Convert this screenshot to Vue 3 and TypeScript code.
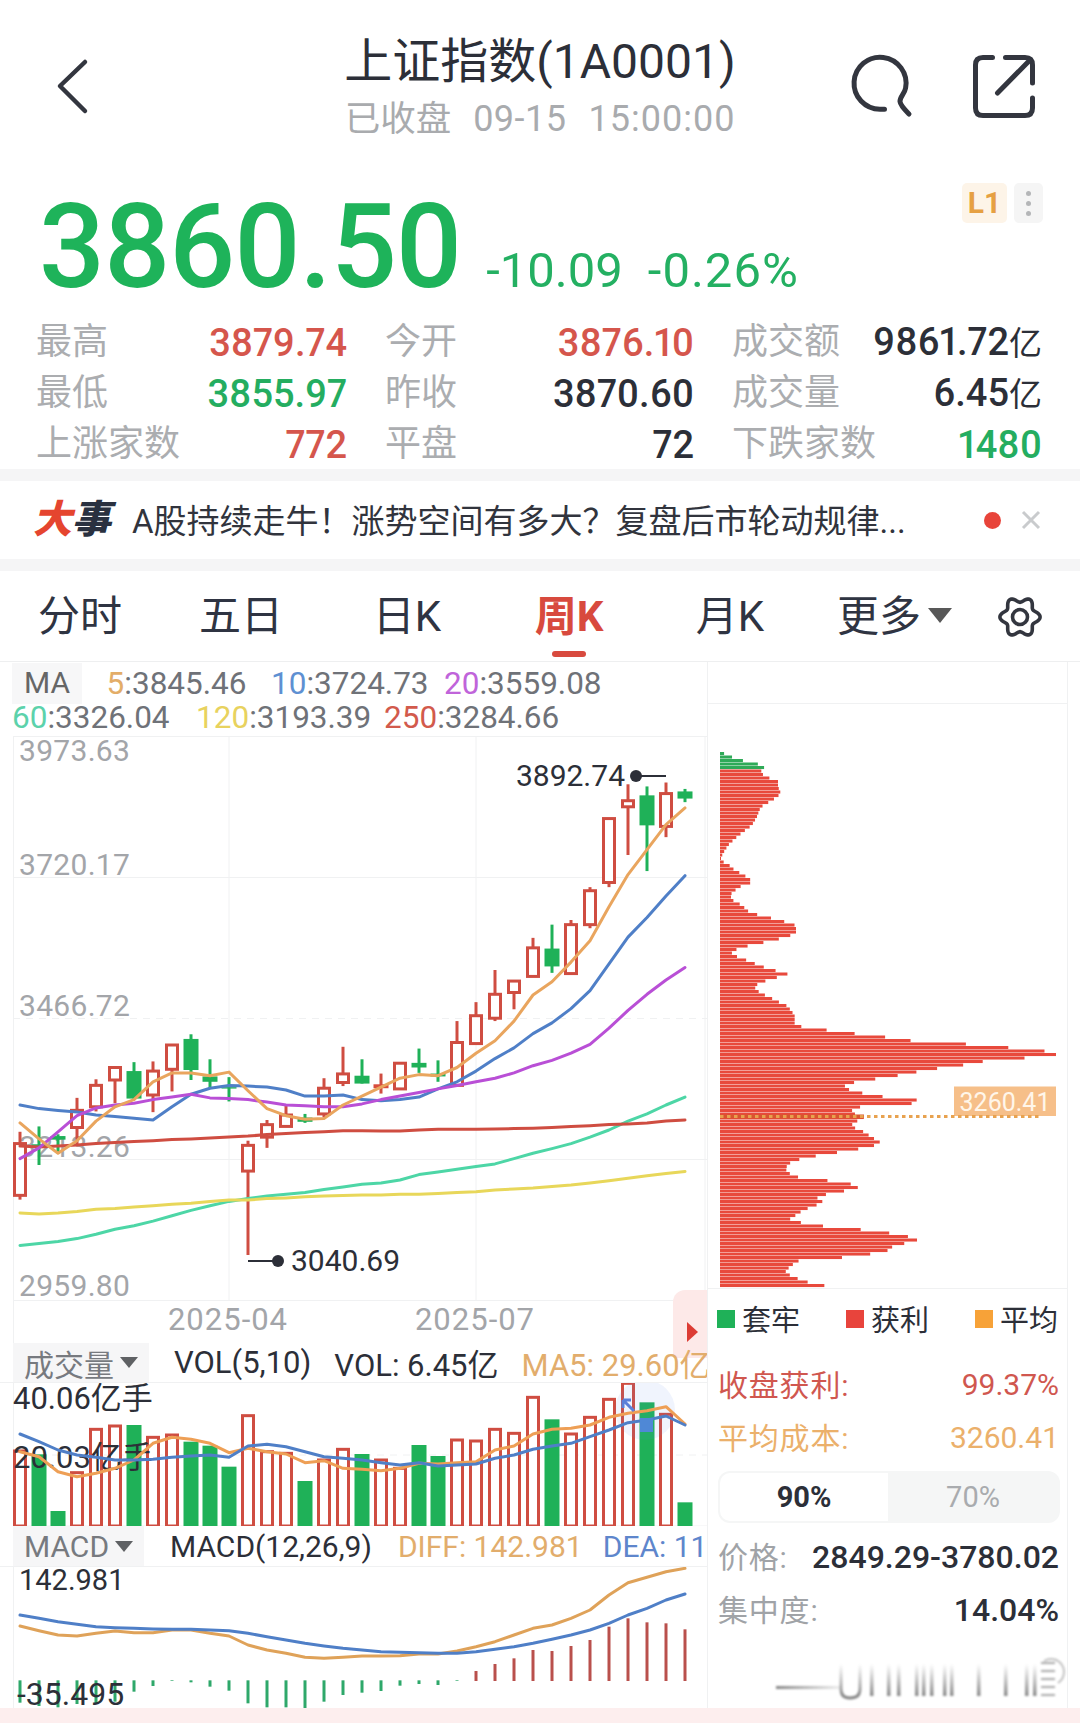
<script setup lang="ts">
const kx = (i: number) => 20 + 19 * i
const ky = (z: number) => 730 + z / 2.8
const sy = (z: number) => 1280 + z / 3
const line = (pts: number[], map: (z: number) => number) =>
  pts.map((z, i) => `${kx(i)},${map(z).toFixed(1)}`).join(' ')

// type (r hollow, s solid red, g solid green), bodyTop, bodyBottom, wickTop, wickBottom (crop coordinates)
const rawCandles: [string, number, number, number, number][] = [
  ['r', 1158, 1303, 1125, 1315], ['g', 1160, 1168, 1110, 1218], ['g', 1137, 1147, 1132, 1185], ['r', 1065, 1113, 1030, 1165],
  ['r', 995, 1055, 978, 1068], ['r', 945, 980, 943, 1045], ['g', 955, 1032, 930, 1035], ['r', 955, 1022, 928, 1070],
  ['r', 882, 950, 880, 1012], ['g', 865, 952, 852, 980], ['g', 970, 985, 922, 1005], ['g', 1000, 1004, 972, 1040],
  ['r', 1163, 1235, 1150, 1470], ['r', 1105, 1140, 1092, 1170], ['r', 1078, 1110, 1050, 1110], ['g', 1085, 1097, 1075, 1100],
  ['r', 1003, 1075, 975, 1085], ['r', 963, 987, 887, 997], ['g', 968, 990, 922, 990], ['s', 992, 1003, 962, 1018],
  ['r', 933, 1005, 930, 1005], ['g', 932, 945, 892, 960], ['g', 962, 970, 925, 985], ['r', 875, 995, 815, 995],
  ['r', 800, 878, 762, 878], ['r', 740, 807, 672, 815], ['r', 703, 735, 703, 782], ['r', 610, 690, 582, 690],
  ['g', 612, 662, 545, 680], ['r', 545, 682, 532, 682], ['r', 450, 545, 440, 555], ['r', 248, 427, 248, 440],
  ['r', 198, 215, 152, 350], ['g', 183, 267, 158, 395], ['r', 178, 270, 147, 300], ['g', 172, 192, 165, 202],
]
const candles = rawCandles.map(([t, a, b, c, d], i) => ({
  t, x: kx(i), top: ky(a), bot: ky(b), wt: ky(c), wb: ky(d),
}))

const maLines = [
  { c: '#4dd6a6', p: [1443, 1438, 1432, 1424, 1412, 1398, 1388, 1375, 1360, 1345, 1332, 1320, 1312, 1305, 1300, 1295, 1287, 1280, 1272, 1268, 1260, 1245, 1238, 1230, 1222, 1215, 1200, 1185, 1172, 1158, 1140, 1120, 1095, 1075, 1050, 1028] },
  { c: '#e8d75a', p: [1352, 1355, 1352, 1348, 1342, 1340, 1336, 1332, 1328, 1325, 1320, 1316, 1316, 1312, 1310, 1307, 1305, 1303, 1302, 1302, 1300, 1300, 1298, 1295, 1293, 1288, 1285, 1282, 1278, 1274, 1268, 1262, 1255, 1248, 1242, 1236] },
  { c: '#cf4d41', p: [1165, 1168, 1165, 1162, 1158, 1155, 1152, 1150, 1147, 1145, 1142, 1140, 1137, 1133, 1130, 1127, 1125, 1122, 1122, 1123, 1123, 1120, 1118, 1118, 1118, 1117, 1116, 1115, 1113, 1110, 1108, 1105, 1103, 1100, 1095, 1092] },
  { c: '#4f7fc7', p: [1050, 1060, 1065, 1070, 1078, 1082, 1087, 1092, 1055, 1020, 1003, 995, 997, 1000, 1008, 1025, 1025, 1022, 1035, 1038, 1035, 1028, 1005, 985, 955, 920, 890, 850, 820, 780, 730, 655, 580, 525, 465, 408] },
  { c: '#b94fd6', p: [1200, 1170, 1125, 1080, 1058, 1050, 1045, 1035, 1028, 1020, 1030, 1032, 1035, 1042, 1050, 1052, 1055, 1055, 1047, 1035, 1025, 1015, 1005, 995, 985, 975, 960, 940, 925, 905, 880, 835, 785, 740, 700, 665] },
  { c: '#e9a55e', p: [1100, 1145, 1185, 1150, 1095, 1055, 1035, 985, 960, 960, 968, 958, 1010, 1060, 1080, 1090, 1088, 1050, 1025, 1000, 975, 965, 968, 945, 905, 870, 815, 742, 705, 650, 590, 495, 405, 335, 265, 218] },
].map((l) => ({ c: l.c, pts: line(l.p, ky) }))

const volTops = [513, 523, 693, 578, 448, 438, 435, 472, 465, 485, 497, 560, 407, 515, 520, 603, 540, 508, 522, 540, 565, 495, 528, 480, 483, 448, 460, 352, 418, 462, 412, 358, 310, 367, 403, 667]
const volGreen = new Set([1, 2, 6, 9, 10, 11, 15, 18, 21, 22, 28, 33, 35])
const volBars = volTops.map((z, i) => ({ x: kx(i), top: sy(z), green: volGreen.has(i) }))
const volBlue = line([462, 485, 510, 525, 532, 540, 540, 538, 532, 528, 525, 532, 498, 493, 500, 515, 530, 535, 540, 548, 555, 548, 558, 555, 552, 535, 525, 508, 498, 490, 470, 450, 428, 420, 408, 435], sy)
const volOrange = line([515, 530, 575, 590, 580, 565, 540, 490, 472, 478, 490, 518, 505, 515, 522, 548, 542, 565, 568, 572, 565, 550, 552, 548, 545, 510, 498, 462, 448, 445, 435, 412, 400, 392, 380, 432], sy)

const macdBlue = line([1005, 1015, 1025, 1033, 1040, 1043, 1045, 1047, 1048, 1048, 1050, 1052, 1060, 1070, 1080, 1090, 1098, 1105, 1110, 1115, 1117, 1118, 1120, 1120, 1115, 1108, 1100, 1090, 1078, 1065, 1050, 1030, 1005, 985, 960, 942], sy)
const macdOrange = line([1038, 1052, 1065, 1068, 1060, 1053, 1058, 1058, 1050, 1050, 1060, 1068, 1095, 1110, 1120, 1132, 1135, 1132, 1128, 1128, 1127, 1122, 1122, 1113, 1100, 1085, 1065, 1045, 1035, 1015, 990, 945, 908, 892, 875, 865], sy)
const macdEnds = [1268, 1278, 1282, 1272, 1270, 1265, 1235, 1218, 1201, 1207, 1220, 1232, 1270, 1282, 1282, 1285, 1265, 1245, 1238, 1233, 1217, 1212, 1215, 1203, 1173, 1152, 1135, 1110, 1113, 1098, 1080, 1040, 1015, 1027, 1030, 1048]
const macdBars = macdEnds.map((z, i) => {
  const a = sy(Math.min(z, 1201))
  const b = sy(Math.max(z, 1203))
  return { x: kx(i) - 1.5, y: a, h: b - a, up: z < 1201 }
})

const profileKeys: [number, number][] = [
  [225, 62], [232, 82], [243, 112], [250, 155], [260, 198], [268, 182], [282, 190], [290, 212], [297, 234], [310, 234], [325, 242], [335, 232], [345, 212], [360, 182], [385, 170], [405, 155], [420, 130], [435, 108], [450, 88], [465, 75], [480, 65], [490, 60], [500, 85], [515, 105], [525, 130], [543, 160], [555, 120], [570, 95], [585, 92], [600, 125], [615, 145], [625, 178], [632, 215], [640, 252], [650, 288], [670, 288], [682, 242], [690, 200], [697, 158], [705, 120], [715, 92], [725, 108], [735, 140], [745, 170], [755, 202], [762, 235], [770, 267], [777, 232], [790, 180], [800, 162], [815, 180], [825, 208], [835, 230], [845, 258], [855, 270], [870, 284], [895, 284], [900, 325], [908, 398], [915, 468], [922, 545], [932, 634], [940, 793], [948, 914], [955, 1000], [960, 1068], [968, 1068], [974, 985], [980, 872], [988, 812], [995, 770], [1003, 682], [1012, 632], [1020, 575], [1028, 510], [1038, 438], [1048, 432], [1058, 472], [1068, 535], [1076, 643], [1084, 680], [1093, 485], [1103, 456], [1112, 465], [1120, 492], [1132, 465], [1142, 450], [1150, 480], [1160, 500], [1170, 518], [1180, 540], [1190, 520], [1198, 472], [1206, 412], [1215, 345], [1222, 302], [1232, 270], [1245, 255], [1255, 265], [1265, 282], [1272, 355], [1278, 415], [1288, 485], [1297, 458], [1305, 398], [1315, 348], [1328, 370], [1338, 340], [1348, 308], [1358, 292], [1368, 268], [1375, 285], [1385, 352], [1392, 450], [1400, 542], [1408, 603], [1415, 640], [1423, 656], [1432, 592], [1440, 570], [1450, 558], [1465, 410], [1472, 295], [1485, 270], [1500, 255], [1510, 278], [1522, 315], [1530, 360], [1537, 406],
]
function profileAt(z: number): number {
  for (let i = 1; i < profileKeys.length; i++) {
    const [z0, x0] = profileKeys[i - 1]
    const [z1, x1] = profileKeys[i]
    if (z <= z1) return x0 + ((x1 - x0) * (z - z0)) / (z1 - z0)
  }
  return profileKeys[profileKeys.length - 1][1]
}
const profile = Array.from({ length: 153 }, (_, i) => {
  const y = 752 + i * 3.5
  const z = (y + 1.3 - 660) * 2.45
  return { y, w: Math.max(1, (profileAt(z) - 60) / 3), green: y < 767 }
})

const gear = Array.from({ length: 96 }, (_, i) => {
  const a = (i / 96) * Math.PI * 2
  const r = 17.4 + 2.7 * Math.cos(6 * a)
  return `${(1020 + r * Math.cos(a)).toFixed(2)},${(617.5 + r * Math.sin(a)).toFixed(2)}`
}).join(' ')

const stats = [
  { l: '最高', v: '3879.74', u: '', c: 'red' }, { l: '今开', v: '3876.10', u: '', c: 'red' }, { l: '成交额', v: '9861.72', u: '亿', c: '' },
  { l: '最低', v: '3855.97', u: '', c: 'green' }, { l: '昨收', v: '3870.60', u: '', c: '' }, { l: '成交量', v: '6.45', u: '亿', c: '' },
  { l: '上涨家数', v: '772', u: '', c: 'red' }, { l: '平盘', v: '72', u: '', c: '' }, { l: '下跌家数', v: '1480', u: '', c: 'green' },
]
const tabs = ['分时', '五日', '日K', '周K', '月K']
const ma1 = [
  { k: '5', v: ':3845.46', c: '#e3ad68' }, { k: '10', v: ':3724.73', c: '#5e90d2' }, { k: '20', v: ':3559.08', c: '#c064da' },
]
const ma2 = [
  { k: '60', v: ':3326.04', c: '#5cd2ab' }, { k: '120', v: ':3193.39', c: '#e8d25e' }, { k: '250', v: ':3284.66', c: '#d25a4c' },
]
const yLabels = [
  { t: '3973.63', y: 750 }, { t: '3720.17', y: 864 }, { t: '3466.72', y: 1005 }, { t: '3213.26', y: 1146 }, { t: '2959.80', y: 1285 },
]
const grid = [736.5, 877.5, 1159.5, 1300.5]
const wmBars = [870, 887, 897, 915, 922, 930, 943, 950, 977, 1004, 1025, 1033]
</script>

<template>
  <div class="page">
    <header class="top">
      <div class="top-left">
        <svg class="ic" width="40" height="60" viewBox="50 56 40 60">
          <path d="M85 62 L60 86 L85 111" />
        </svg>
      </div>
      <div class="top-mid">
        <div class="title">上证指数(1A0001)</div>
        <div class="sub"><span class="sub-cn">已收盘</span><span class="sub-d">09-15</span><span class="sub-t">15:00:00</span></div>
      </div>
      <div class="top-right">
        <svg class="ic" width="64" height="66" viewBox="850 53 64 66">
          <path d="M884.5 109.2 H880 A26 26 0 1 1 905.6 88 C905 93 899.6 97 900 101.5 C900.4 105.5 905 110 909 114" />
        </svg>
        <svg class="ic" width="66" height="68" viewBox="971 53 66 68">
          <path d="M992.5 57.5 H983 Q975.5 57.5 975.5 65 V108 Q975.5 115.5 983 115.5 H1025 Q1032.5 115.5 1032.5 108 V98" />
          <path d="M1005.5 57.5 H1025 Q1032.5 57.5 1032.5 65 V83" />
          <path d="M997.5 93 L1030 60" />
        </svg>
      </div>
    </header>

    <section class="quote">
      <div class="price">3860.50</div>
      <div class="chg">-10.09</div>
      <div class="chg pct">-0.26%</div>
      <div class="badges">
        <span class="badge-l1">L1</span>
        <span class="badge-more"><i></i><i></i><i></i></span>
      </div>
    </section>

    <section class="stats">
      <div v-for="s in stats" :key="s.l" class="stat">
        <span class="stat-l">{{ s.l }}</span>
        <span class="stat-v" :class="s.c">{{ s.v }}<span v-if="s.u" class="stat-u">{{ s.u }}</span></span>
      </div>
    </section>

    <div class="band"></div>
    <section class="news">
      <span class="logo"><b class="logo-a">大</b><b class="logo-b">事</b></span>
      <span class="news-t">A股持续走牛&#xFF01;涨势空间有多大&#xFF1F;复盘后市轮动规律...</span>
      <span class="news-dot"></span>
      <svg class="news-x" width="20" height="20" viewBox="0 0 20 20"><path d="M2 2 L18 18 M18 2 L2 18" /></svg>
    </section>
    <div class="band"></div>

    <nav class="tabs">
      <span v-for="t in tabs" :key="t" class="tab" :class="{ on: t === '周K' }">{{ t }}</span>
      <div class="tab-end">
        <span class="more">更多</span>
        <i class="more-tri"></i>
        <svg width="46" height="46" viewBox="997 594.5 46 46" class="gear">
          <polygon :points="gear" />
          <circle cx="1020" cy="617.5" r="7.5" />
        </svg>
      </div>
    </nav>

    <section class="board">
      <div class="charts">
        <div class="ma">
          <div class="ma-row first">
            <span class="ma-box">MA</span>
            <span v-for="m in ma1" :key="m.k" class="ma-item"><em :style="{ color: m.c }">{{ m.k }}</em>{{ m.v }}</span>
          </div>
          <div class="ma-row second">
            <span v-for="m in ma2" :key="m.k" class="ma-item"><em :style="{ color: m.c }">{{ m.k }}</em>{{ m.v }}</span>
          </div>
        </div>

        <div class="kline">
          <svg width="707" height="607" viewBox="0 736 707 607" class="plot">
            <line v-for="g in grid" :key="g" x1="13" x2="707" :y1="g" :y2="g" class="gl" />
            <line x1="13" x2="707" y1="1018.5" y2="1018.5" class="gl" stroke-dasharray="7 6" />
            <line x1="13.5" x2="13.5" y1="736" y2="1343" class="gl" />
            <line x1="229" x2="229" y1="736" y2="1300" class="gl" />
            <line x1="476" x2="476" y1="736" y2="1300" class="gl" />
            <line x1="705" x2="705" y1="736" y2="1300" class="gl" />
            <text v-for="l in yLabels" :key="l.t" x="19" :y="l.y" class="axis">{{ l.t }}</text>
            <text x="228" y="1319" class="axis mid date">2025-04</text>
            <text x="475" y="1319" class="axis mid date">2025-07</text>

            <g v-for="c in candles" :key="c.x">
              <template v-if="c.t === 'r'">
                <line :x1="c.x" :x2="c.x" :y1="c.wt" :y2="c.top" class="wick-r" />
                <line :x1="c.x" :x2="c.x" :y1="c.bot" :y2="c.wb" class="wick-r" />
                <rect :x="c.x - 5.5" :y="c.top" width="11" :height="c.bot - c.top" class="body-r" />
              </template>
              <template v-else>
                <line :x1="c.x" :x2="c.x" :y1="c.wt" :y2="c.wb" :class="c.t === 'g' ? 'wick-g' : 'wick-r'" />
                <rect :x="c.x - 7.5" :y="c.top" width="15" :height="c.bot - c.top" :class="c.t === 'g' ? 'fill-g' : 'fill-r'" />
              </template>
            </g>
            <polyline v-for="m in maLines" :key="m.c" :points="m.pts" :stroke="m.c" class="ml" />

            <line x1="636" x2="666" y1="776" y2="776" class="mark" />
            <circle cx="636" cy="776" r="6" class="dot" />
            <text x="625" y="775" class="note end">3892.74</text>
            <line x1="248" x2="278" y1="1261" y2="1261" class="mark" />
            <circle cx="278" cy="1261" r="6" class="dot" />
            <text x="291" y="1260" class="note">3040.69</text>
          </svg>
          <div class="pull"><i></i></div>
        </div>

        <div class="head vol-head">
          <span class="head-box">成交量<i></i></span>
          <span class="head-t">VOL(5,10)</span>
          <span class="head-t">VOL: 6.45亿</span>
          <span class="head-t c-or">MA5: 29.60亿</span>
        </div>
        <svg width="707" height="143" viewBox="0 1383 707 143" class="plot">
          <line x1="13.5" x2="13.5" y1="1383" y2="1526" class="gl" />
          <line x1="13" x2="707" y1="1455" y2="1455" class="gl" stroke-dasharray="7 6" />
          <line x1="13" x2="707" y1="1526" y2="1526" class="gl" />
          <template v-for="b in volBars" :key="b.x">
            <rect v-if="b.green" :x="b.x - 7.5" :y="b.top" width="15" :height="1526 - b.top" class="fill-g" />
            <rect v-else :x="b.x - 5.5" :y="b.top" width="11" :height="1526 - b.top" class="body-r" />
          </template>
          <circle cx="645" cy="1410" r="30" fill="#5583e6" opacity="0.09" />
          <text x="13" y="1398" class="note dark wide">40.06亿手</text>
          <text x="13" y="1457" class="note dark wide">20.03亿手</text>
          <polyline :points="volOrange" stroke="#ee9f55" class="ml" />
          <polyline :points="volBlue" stroke="#4f7fc7" class="ml" />
          <path d="M623 1400 V1408 M623 1400 H631 M623 1400 L634 1411" class="touch" />
          <rect x="640" y="1418" width="13" height="14" fill="#4f88d6" />
        </svg>

        <div class="head macd-head">
          <span class="head-box">MACD<i></i></span>
          <span class="head-t">MACD(12,26,9)</span>
          <span class="head-t c-or">DIFF: 142.981</span>
          <span class="head-t c-bl dea">DEA: 110.234</span>
        </div>
        <svg width="707" height="141" viewBox="0 1567 707 141" class="plot">
          <line x1="13.5" x2="13.5" y1="1567" y2="1708" class="gl" />
          <rect v-for="b in macdBars" :key="b.x" :x="b.x" :y="b.y" width="3" :height="b.h" :fill="b.up ? '#b9504c' : '#2ea86a'" />
          <polyline :points="macdOrange" stroke="#dfa259" class="ml" />
          <polyline :points="macdBlue" stroke="#4f7fc7" class="ml" />
          <text x="19" y="1580" class="note dark small">142.981</text>
          <text x="17" y="1694" class="note dark big">-35.495</text>
        </svg>
      </div>

      <aside class="side">
        <div class="side-top"></div>
        <svg width="359" height="584" viewBox="708 704 359 584" class="profile">
          <rect v-for="p in profile" :key="p.y" x="720" :y="p.y" :width="p.w" height="3.05" :fill="p.green ? '#2faa58' : '#e8493c'" />
          <rect x="954" y="1086.5" width="102" height="29.5" fill="#f6bf89" />
          <text x="1005" y="1102" class="cost">3260.41</text>
          <rect x="720" y="1114.5" width="144" height="4" fill="#d8552f" />
          <line x1="720" x2="1041" y1="1116.5" y2="1116.5" class="dots" />
        </svg>
        <div class="legend">
          <span class="lg"><i class="sq-g"></i><span class="lg-t">套牢</span></span>
          <span class="lg"><i class="sq-r"></i><span class="lg-t">获利</span></span>
          <span class="lg"><i class="sq-o"></i><span class="lg-t">平均</span></span>
        </div>
        <div class="row c-red"><span class="row-l">收盘获利:</span><span class="num">99.37%</span></div>
        <div class="row c-gold"><span class="row-l">平均成本:</span><span class="num">3260.41</span></div>
        <div class="seg">
          <span class="seg-a">90%</span>
          <span class="seg-b">70%</span>
        </div>
        <div class="row info"><span class="row-l info-l">价格:</span><span class="num dk">2849.29-3780.02</span></div>
        <div class="row info"><span class="row-l info-l">集中度:</span><span class="num dk">14.04%</span></div>
        <svg class="wm" width="359" height="71" viewBox="708 1637 359 71">
          <defs>
            <linearGradient id="wmv" gradientUnits="userSpaceOnUse" x1="0" x2="0" y1="1665" y2="1698">
              <stop offset="0" stop-color="#333" stop-opacity="0" />
              <stop offset="1" stop-color="#333" stop-opacity="0.6" />
            </linearGradient>
            <linearGradient id="wmh" gradientUnits="userSpaceOnUse" x1="776" x2="840" y1="0" y2="0">
              <stop offset="0" stop-color="#555" stop-opacity="0.7" />
              <stop offset="1" stop-color="#555" stop-opacity="0.1" />
            </linearGradient>
          </defs>
          <rect x="776" y="1687" width="64" height="3" fill="url(#wmh)" />
          <path d="M841 1665 V1690 Q841 1699 850 1699 Q860 1699 860 1690 V1665" fill="none" stroke="url(#wmv)" stroke-width="3" />
          <rect v-for="x in wmBars" :key="x" :x="x" y="1665" width="3.5" height="32" fill="url(#wmv)" />
          <path d="M1041 1664 H1055 M1041 1672 H1055 M1041 1680 H1055 M1041 1688 H1055 M1041 1696 H1055" stroke="#444" stroke-width="1.5" opacity="0.6" />
          <path d="M1044 1662 A13 13 0 0 1 1058 1684" fill="none" stroke="#999" stroke-width="2" opacity="0.6" />
        </svg>
      </aside>
    </section>
    <div class="strip"></div>
  </div>
</template>

<style>
html, body { margin: 0; background: #fff; }
</style>

<style scoped>
.page {
  width: 1080px;
  height: 1723px;
  overflow: hidden;
  background: #fff;
  color: #2c2f38;
  font-family: Roboto, "Noto Sans CJK SC", sans-serif;
}
.top {
  display: grid;
  grid-template-columns: 1fr auto 1fr;
  height: 170px;
  box-sizing: border-box;
  align-items: start;
}
.top-left { padding: 56px 0 0 50px; }
.top-right {
  display: flex;
  justify-content: flex-end;
  gap: 57px;
  padding: 53px 43px 0 0;
}
.ic { display: block; fill: none; stroke: #33363f; stroke-width: 5; stroke-linecap: round; stroke-linejoin: round; }
.top-left .ic { stroke-width: 4.5; }
.top-mid { padding-top: 32px; text-align: center; }
.title { font-size: 48px; line-height: 60px; white-space: nowrap; }
.sub { margin-top: 6px; font-size: 36px; line-height: 42px; color: #a9abae; white-space: nowrap; display: flex; justify-content: center; }
.sub-cn { font-size: 35.5px; }
.sub-d { margin-left: 22px; letter-spacing: 0.5px; }
.sub-t { margin-left: 22px; letter-spacing: 1px; }

.quote {
  display: flex;
  align-items: baseline;
  height: 146px;
  box-sizing: border-box;
  padding: 13px 37px 0 39px;
  position: relative;
}
.price { font-size: 116px; line-height: 128px; font-weight: 500; color: #1eb35a; letter-spacing: -0.8px; }
.chg { font-size: 49px; color: #24b062; margin-left: 25px; line-height: 60px; }
.pct { letter-spacing: 1px; }
.badges { position: absolute; right: 37px; top: 13px; display: flex; gap: 7px; }
.badge-l1 {
  width: 45px; height: 40px; border-radius: 5px; background: #fdf4e8; color: #e6a042;
  font-size: 30px; font-weight: 700; line-height: 40px; text-align: center;
}
.badge-more {
  width: 29px; height: 40px; border-radius: 5px; background: #f5f5f5;
  display: flex; flex-direction: column; align-items: center; justify-content: center; gap: 5px;
}
.badge-more i { width: 5px; height: 5px; border-radius: 50%; background: #b4b6b8; }

.stats {
  display: grid;
  grid-template-columns: 311px 309px 310px;
  column-gap: 38px;
  padding: 0 36px 0 36px;
  grid-auto-rows: 51px;
  height: 153px;
}
.stat { display: flex; justify-content: space-between; align-items: center; }
.stat-l { font-size: 36px; color: #abadb0; line-height: 46px; margin-top: 1.5px; }
.stat-v { font-size: 38px; font-weight: 500; color: #2c2f38; line-height: 46px; margin-top: 2px; font-variant-numeric: proportional-nums; }
.stat-u { font-size: 33px; font-weight: 400; }
.red { color: #d5564c; }
.green { color: #24ad60; }

.band { height: 12px; background: #f5f5f6; }
.news {
  display: flex;
  align-items: center;
  height: 78px;
  padding: 0 39px 0 36px;
}
.logo { display: flex; width: 79px; font-size: 39px; line-height: 40px; }
.logo b { display: block; font-weight: 900; transform: skewX(-14deg); }
.logo-a { color: #e5452f; }
.logo-b { color: #2a3140; }
.news-t { margin-left: 17px; margin-top: -3px; font-size: 33px; color: #31343d; flex: 1; white-space: nowrap; }
.news-dot { width: 17px; height: 17px; border-radius: 50%; background: #e8443a; margin-right: 20px; }
.news-x { fill: none; stroke: #c9cbcd; stroke-width: 3; }

.tabs {
  display: grid;
  grid-template-columns: 160px 162px 170px 154px 168px 1fr;
  height: 91px;
  box-sizing: border-box;
  border-bottom: 1px solid #eeeff0;
  align-items: center;
  font-size: 42px;
  color: #2f3442;
}
.tab { text-align: center; position: relative; line-height: 91px; white-space: nowrap; }
.tab.on { color: #d84a3e; font-weight: 700; }
.tab.on::after {
  content: "";
  position: absolute;
  left: 50%;
  margin-left: -17px;
  bottom: 5px;
  width: 34px;
  height: 6px;
  border-radius: 3px;
  background: #d84a3e;
}
.tab-end { display: flex; align-items: center; padding-left: 23px; height: 90px; }
.more { line-height: 91px; white-space: nowrap; }
.more-tri {
  margin-left: 7px;
  width: 0; height: 0;
  border-left: 12px solid transparent;
  border-right: 12px solid transparent;
  border-top: 15px solid #585858;
  margin-top: -3px;
}
.gear { margin-left: 45px; fill: none; stroke: #33363f; stroke-width: 3.6; display: block; }

.board { display: flex; height: 1046px; }
.charts { width: 707px; flex: none; }
.ma { height: 74px; box-sizing: border-box; padding: 1px 0 0 12px; color: #6f7278; font-size: 31.5px; white-space: nowrap; }
.ma-row { display: flex; }
.ma-row.first { height: 42px; align-items: center; }
.ma-row.second { height: 24px; align-items: center; margin-top: 1px; }
.ma-box { width: 70px; height: 41px; line-height: 40px; background: #f7f7f8; text-align: center; font-size: 30px; color: #666; margin: -2px 24.6px 0 0; }
.ma-item { line-height: 24px; }
.first .ma-item:nth-child(2) { width: 164.4px; }
.first .ma-item:nth-child(3) { width: 173px; }
.second .ma-item:nth-child(1) { width: 184px; }
.second .ma-item:nth-child(2) { width: 188px; }
.ma-item em { font-style: normal; }

.kline { position: relative; height: 607px; }
.plot { display: block; }
.gl { stroke: #f0f1f2; stroke-width: 1; }
.axis { font-size: 30px; fill: #a3a5a9; dominant-baseline: central; letter-spacing: 0.3px; }
.axis.mid { text-anchor: middle; }
.axis.date { font-size: 31px; letter-spacing: 1px; }
.note { font-size: 30px; fill: #2c2f38; dominant-baseline: central; }
.note.end { text-anchor: end; }
.note.dark { fill: #2c2f38; }
.note.wide { font-size: 31px; }
.note.big { font-size: 32px; }
.note.small { font-size: 29px; }
.mark { stroke: #2c2f38; stroke-width: 2; }
.dot { fill: #2c2f38; }
.wick-r { stroke: #cf4d41; stroke-width: 3; }
.wick-g { stroke: #1fb158; stroke-width: 3; }
.body-r { fill: #fff; stroke: #cf4d41; stroke-width: 3; }
.fill-r { fill: #d84c3c; }
.fill-g { fill: #1fb158; }
.ml { fill: none; stroke-width: 3; stroke-linejoin: round; stroke-linecap: round; }
.touch { fill: none; stroke: #5b7fd9; stroke-width: 3; }
.pull {
  position: absolute;
  left: 673px;
  top: 554px;
  width: 34px;
  height: 68px;
  background: #fde9e8;
  border-radius: 12px 0 0 0;
}
.pull i {
  position: absolute;
  left: 14px;
  top: 32px;
  width: 0; height: 0;
  border-top: 10.5px solid transparent;
  border-bottom: 10.5px solid transparent;
  border-left: 11px solid #dc3c34;
}
.head {
  position: relative;
  display: flex;
  width: 707px;
  overflow: hidden;
  box-sizing: border-box;
  padding-left: 13px;
  border-bottom: 1px solid #f0f1f2;
  white-space: nowrap;
  align-items: center;
}
.vol-head { height: 40px; column-gap: 23px; font-size: 31px; }
.vol-head .head-box { margin-right: 2px; }
.macd-head { height: 41px; column-gap: 26px; font-size: 30px; }
.dea { margin-left: -6px; }
.head-box {
  flex: none;
  height: 100%;
  background: #f6f6f7;
  color: #777a7f;
  display: flex;
  align-items: center;
  padding-left: 11px;
  box-sizing: border-box;
  font-size: 30px;
}
.vol-head .head-box { width: 136px; }
.macd-head .head-box { width: 131px; }
.head-box i {
  margin-left: 6px;
  width: 0; height: 0;
  border-left: 9px solid transparent;
  border-right: 9px solid transparent;
  border-top: 11px solid #5f6164;
}
.head-t { flex: none; }
.c-or { color: #e2ad6c; }
.c-bl { color: #5e86cc; }

.side {
  width: 361px;
  flex: none;
  box-sizing: border-box;
  border-left: 1px solid #f0f1f2;
  border-right: 1px solid #f0f1f2;
  display: flex;
  flex-direction: column;
}
.side-top { height: 42px; box-sizing: border-box; border-bottom: 1px solid #f0f1f2; flex: none; }
.profile { display: block; flex: none; border-bottom: 1px solid #f0f1f2; height: 584px; box-sizing: content-box; margin-bottom: -1px; }
.cost { font-size: 25px; fill: #fff6ea; text-anchor: middle; dominant-baseline: central; }
.dots { stroke: #e8a24f; stroke-width: 3; stroke-dasharray: 3.5 3.5; }
.legend {
  display: flex;
  justify-content: space-between;
  padding: 0 9px 2px;
  height: 64px;
  align-items: center;
  font-size: 29px;
  box-sizing: border-box;
  flex: none;
}
.lg { display: flex; align-items: center; gap: 7px; }
.lg i { width: 18px; height: 18px; }
.lg-t { margin-top: -3px; }
.sq-g { background: #1fb158; }
.sq-r { background: #e8443c; }
.sq-o { background: #f7a238; }
.row {
  display: flex;
  justify-content: space-between;
  align-items: center;
  height: 53px;
  padding: 0 8px 0 10px;
  font-size: 30px;
  flex: none;
  white-space: nowrap;
}
.row-l { margin-top: -3px; letter-spacing: 0.8px; }
.num { font-size: 30px; }
.c-red { color: #d0574f; margin-top: 6px; }
.c-gold { color: #ebb06b; }
.seg {
  display: flex;
  margin: 7px 7px 7px 10px;
  height: 52px;
  box-sizing: border-box;
  border-radius: 12px;
  background: #f5f6f6;
  flex: none;
  padding: 2px;
  font-size: 29px;
  line-height: 48px;
  text-align: center;
}
.seg-a { width: 168px; background: #fff; border-radius: 10px 0 0 10px; font-weight: 700; color: #2c2f38; }
.seg-b { flex: 1; color: #a9abae; }
.info-l { color: #a0a3a7; }
.dk { color: #2c2f38; font-size: 32px; font-weight: 500; }
.wm { display: block; flex: none; filter: blur(0.8px); }
.strip { height: 15px; background: #fdeeee; }
</style>
